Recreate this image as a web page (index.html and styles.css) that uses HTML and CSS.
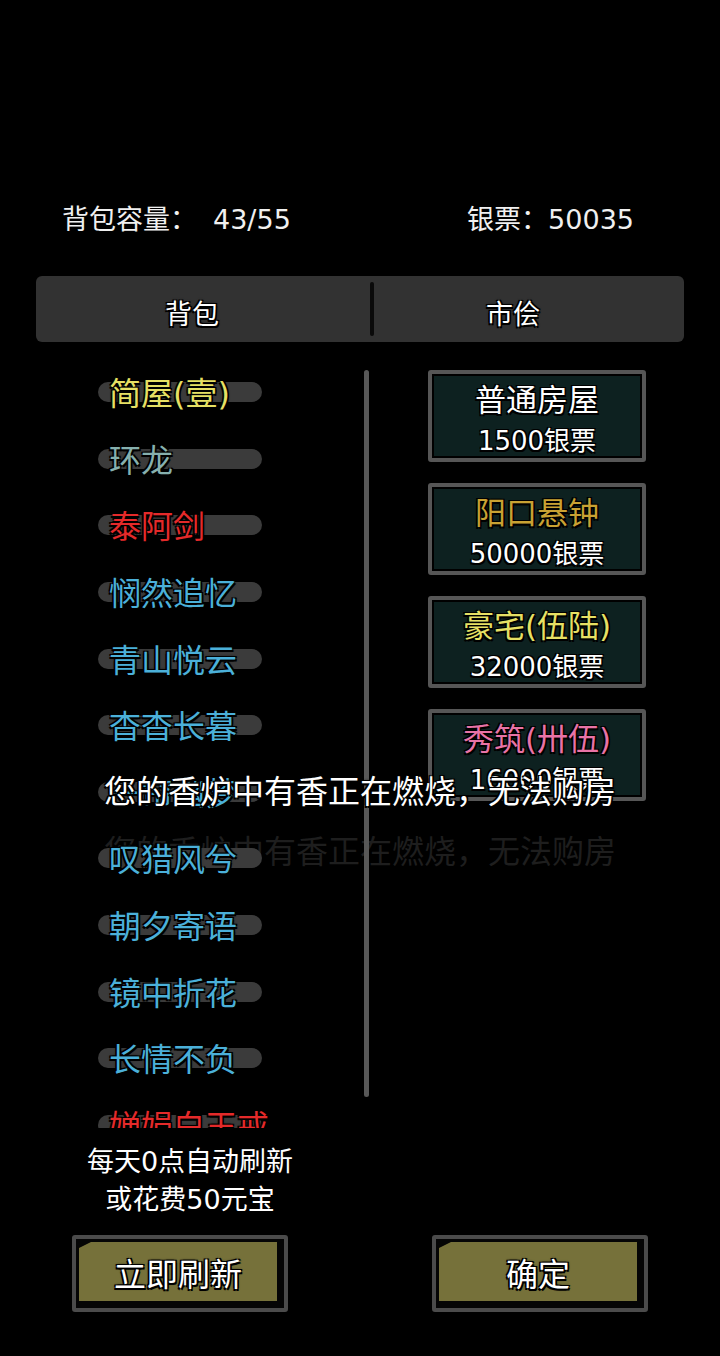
FILE: index.html
```html
<!DOCTYPE html>
<html lang="zh-CN">
<head>
<meta charset="utf-8">
<link rel="stylesheet" href="styles.css">
</head>
<body>
<div class="page">
  <div class="header">
    <span>背包容量：<span class="cap-num">43/55</span></span>
    <span>银票：50035</span>
  </div>
  <div class="tabs">
    <div class="tab tab-left">背包</div>
    <div class="tab-divider"></div>
    <div class="tab tab-right">市侩</div>
  </div>
  <div class="main">
    <div class="left-col">
      <div class="list">
        <div class="item"><div class="pill"></div><div class="name c-yellow">简屋(壹)</div></div>
        <div class="item"><div class="pill"></div><div class="name c-gray">环龙</div></div>
        <div class="item"><div class="pill"></div><div class="name c-red">泰阿剑</div></div>
        <div class="item"><div class="pill"></div><div class="name c-blue">悯然追忆</div></div>
        <div class="item"><div class="pill"></div><div class="name c-blue">青山悦云</div></div>
        <div class="item"><div class="pill"></div><div class="name c-blue">杳杳长暮</div></div>
        <div class="item"><div class="pill"></div><div class="name c-blue">一帘幽梦</div></div>
        <div class="item"><div class="pill"></div><div class="name c-blue">叹猎风兮</div></div>
        <div class="item"><div class="pill"></div><div class="name c-blue">朝夕寄语</div></div>
        <div class="item"><div class="pill"></div><div class="name c-blue">镜中折花</div></div>
        <div class="item"><div class="pill"></div><div class="name c-blue">长情不负</div></div>
        <div class="item"><div class="pill"></div><div class="name c-red">婵娟白玉戒</div></div>
      </div>
      <div class="scrollbar"></div>
    </div>
    <div class="right-col">
      <div class="card"><div class="card-title c-white">普通房屋</div><div class="card-price">1500银票</div></div>
      <div class="card"><div class="card-title c-gold">阳口悬钟</div><div class="card-price">50000银票</div></div>
      <div class="card"><div class="card-title c-yellow">豪宅(伍陆)</div><div class="card-price">32000银票</div></div>
      <div class="card"><div class="card-title c-pink">秀筑(卅伍)</div><div class="card-price">16000银票</div></div>
    </div>
  </div>
  <div class="bottom">
    <div class="refresh-note">每天0点自动刷新<br>或花费50元宝</div>
    <div class="buttons">
      <div class="btn"><div class="btn-face">立即刷新</div></div>
      <div class="btn"><div class="btn-face">确定</div></div>
    </div>
  </div>
  <div class="toast-ghost">您的香炉中有香正在燃烧，无法购房</div>
  <div class="toast">您的香炉中有香正在燃烧，无法购房</div>
</div>
</body>
</html>
```
FILE: styles.css
```css
html, body {
  margin: 0;
  padding: 0;
  background: #000;
}
body {
  font-family: "DejaVu Sans", "Noto Sans CJK SC", sans-serif;
  color: #f2f2f2;
}
.page {
  width: 720px;
  height: 1356px;
  position: relative;
  z-index: 0;
  overflow: hidden;
}
.header {
  display: flex;
  justify-content: space-between;
  padding: 202px 86px 0 62px;
  height: 36px;
  font-size: 27px;
  line-height: 36px;
  color: #f0f0f0;
}
.cap-num {
  margin-left: 16px;
}
.tabs {
  margin: 38px 36px 0 36px;
  height: 66px;
  background: #323232;
  border-radius: 6px;
  display: flex;
  align-items: center;
}
.tab {
  font-size: 27px;
  line-height: 66px;
  padding-top: 6px;
  height: 60px;
  text-align: center;
  color: #fff;
  text-shadow: 1.5px 1.5px 0 #000, -1.5px -1.5px 0 #000, 1.5px -1.5px 0 #000, -1.5px 1.5px 0 #000, 0 0 3px #000;
}
.tab-left {
  width: 312px;
  margin-right: 22px;
}
.tab-divider {
  width: 4px;
  height: 54px;
  background: #0a0a0a;
  border-radius: 2px;
}
.tab-right {
  width: 278px;
}
.main {
  display: grid;
  grid-template-columns: 372px 1fr;
  height: 786px;
}
.left-col {
  display: flex;
  padding-left: 98px;
  height: 786px;
}
.list {
  width: 266px;
  padding-top: 18px;
  overflow: hidden;
  height: 768px;
}
.item {
  display: grid;
  height: 66.6px;
  align-items: center;
}
.item > div {
  grid-area: 1 / 1;
}
.pill {
  width: 164px;
  height: 20px;
  border-radius: 10px;
  background: #3b3b3b;
  margin-top: -2px;
}
.name {
  margin-left: 11px;
  margin-top: 2px;
  font-size: 32px;
  line-height: 40px;
  white-space: nowrap;
  text-shadow: 1.5px 1.5px 0 #000, -1.5px -1.5px 0 #000, 1.5px -1.5px 0 #000, -1.5px 1.5px 0 #000, 0 0 3px #000;
}
.scrollbar {
  width: 5px;
  height: 727px;
  margin-top: 28px;
  background: #585858;
  border-radius: 3px;
}
.right-col {
  padding: 28px 0 0 56px;
  display: flex;
  flex-direction: column;
  gap: 21px;
}
.card {
  width: 218px;
  height: 92px;
  box-sizing: border-box;
  border: 4px solid #565656;
  border-radius: 3px;
  background: #0d2120;
  box-shadow: inset 0 0 0 2px #000;
  padding-top: 6px;
  text-align: center;
  white-space: nowrap;
}
.card-title {
  font-size: 31px;
  line-height: 40px;
  text-shadow: 1.5px 1.5px 0 #000, -1.5px -1.5px 0 #000, 1.5px -1.5px 0 #000, -1.5px 1.5px 0 #000;
}
.card-price {
  font-size: 26px;
  line-height: 36px;
  padding-top: 3px;
  color: #fff;
  text-shadow: 1.5px 1.5px 0 #000, -1.5px -1.5px 0 #000, 1.5px -1.5px 0 #000, -1.5px 1.5px 0 #000;
}
.c-yellow { color: #e6e064; }
.c-gray { color: #86b0ae; }
.c-red { color: #e42a2a; }
.c-blue { color: #4bb0d9; }
.c-white { color: #fff; }
.c-gold { color: #c9a233; }
.c-pink { color: #e873a6; }
.bottom {
  padding-top: 15px;
}
.refresh-note {
  width: 380px;
  text-align: center;
  font-size: 27px;
  line-height: 38px;
  color: #fff;
  text-shadow: 1.5px 1.5px 0 #000, -1.5px -1.5px 0 #000, 1.5px -1.5px 0 #000, -1.5px 1.5px 0 #000;
}
.buttons {
  display: flex;
  gap: 144px;
  padding-left: 72px;
  margin-top: 16px;
}
.btn {
  width: 216px;
  height: 77px;
  box-sizing: border-box;
  border: 4px solid #4b4b4b;
  border-radius: 3px;
  padding: 3px 7px 7px 3px;
  background: #050505;
}
.btn-face {
  height: 100%;
  background: #76713a;
  clip-path: polygon(12px 0, 100% 0, 100% 100%, 0 100%, 0 6px);
  text-align: center;
  font-size: 32px;
  line-height: 66px;
  color: #fff;
  text-shadow: 1.5px 1.5px 0 #000, -1.5px -1.5px 0 #000, 1.5px -1.5px 0 #000, -1.5px 1.5px 0 #000, 0 0 3px #000;
}
.toast, .toast-ghost {
  position: absolute;
  left: 0;
  right: 0;
  text-align: center;
  font-size: 32px;
  line-height: 40px;
  white-space: nowrap;
}
.toast {
  top: 772px;
  color: #fff;
  text-shadow: 1.5px 1.5px 0 #000, -1.5px -1.5px 0 #000, 1.5px -1.5px 0 #000, -1.5px 1.5px 0 #000, 0 0 3px #000;
}
.toast-ghost {
  top: 832px;
  color: #1e1e1e;
  z-index: -1;
}
```
